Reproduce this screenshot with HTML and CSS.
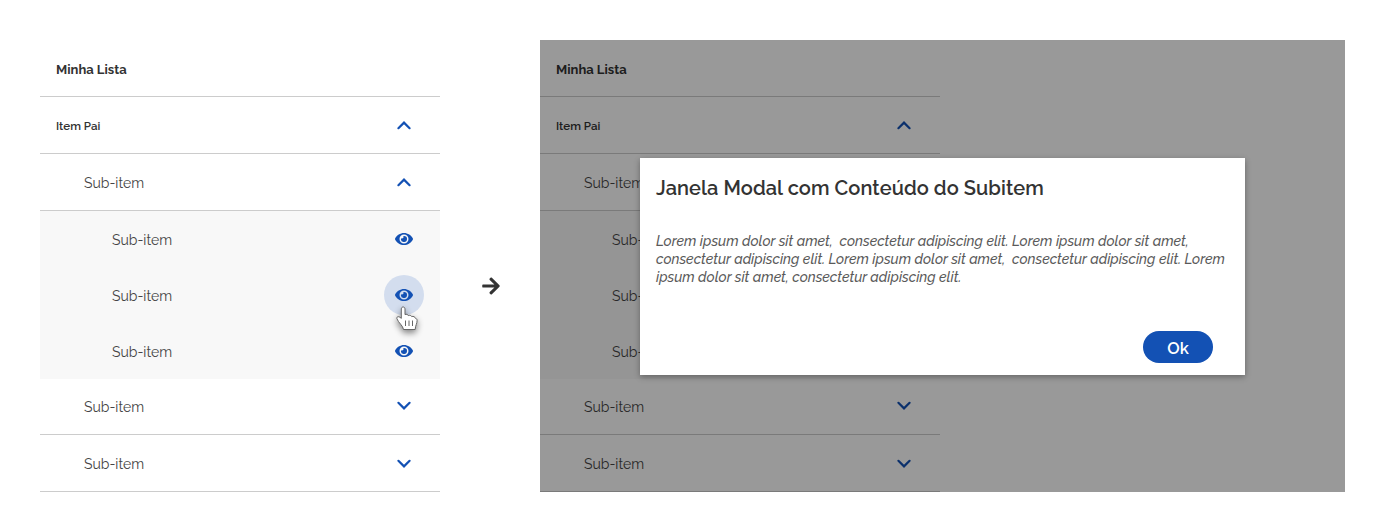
FILE: index.html
```html
<!DOCTYPE html>
<html lang="pt-BR">
<head>
<meta charset="utf-8">
<title>Minha Lista</title>
<link rel="stylesheet" href="styles.css">
</head>
<body>
<svg class="defs" width="0" height="0">
  <symbol id="up" viewBox="0 0 14 9"><path d="M1.400 7.200 7 1.600l5.600 5.600" fill="none" stroke="currentColor" stroke-width="2.2" stroke-linecap="round"/></symbol>
  <symbol id="down" viewBox="0 0 14 9"><path d="M1.400 1.800 7 7.400l5.600-5.600" fill="none" stroke="currentColor" stroke-width="2.2" stroke-linecap="round"/></symbol>
  <symbol id="eye" viewBox="0 0 576 512"><path fill="currentColor" d="M572.52 241.4C518.29 135.59 410.93 64 288 64S57.68 135.64 3.48 241.41a32.35 32.35 0 0 0 0 29.19C57.71 376.41 165.07 448 288 448s230.32-71.64 284.52-177.41a32.35 32.35 0 0 0 0-29.19zM288 400a144 144 0 1 1 144-144 143.93 143.93 0 0 1-144 144zm0-240a95.31 95.31 0 0 0-25.31 3.79 47.85 47.85 0 0 1-66.9 66.9A95.78 95.78 0 1 0 288 160z"/></symbol>
</svg>
<main class="page">
  <section class="list">
    <div class="row"><span class="title">Minha Lista</span></div>
    <div class="row"><span class="parent">Item Pai</span><svg class="chevron"><use href="#up"/></svg></div>
    <div class="row sub"><span>Sub-item</span><svg class="chevron"><use href="#up"/></svg></div>
    <div class="group">
      <div class="row leaf"><span>Sub-item</span><i class="action"><svg class="eye"><use href="#eye"/></svg></i></div>
      <div class="row leaf"><span>Sub-item</span><i class="action hover"><svg class="eye"><use href="#eye"/></svg>
        <svg class="cursor" viewBox="0 0 22 25"><path d="M5.300 3C5.300.3 9 .3 9 3v5.600c1.300-.7 2.900-.2 3.300 1 1.300-.6 2.900-.2 3.400 1 1.600-.6 3.400.3 3.700 1.700 1.300.3 1.700 1 1.700 2.200 0 3.500-1.700 4.500-1.900 9H7.500C7 19.500 2.500 17 .9 12.700c-.6-2 1.800-3.200 4.400-.3z" fill="#fff" stroke="#666" stroke-width="1"/><path d="M9.500 14.500v5.500M13 14.500v5.500M16.500 14.500v5.500" stroke="#666" fill="none"/></svg></i></div>
      <div class="row leaf"><span>Sub-item</span><i class="action"><svg class="eye"><use href="#eye"/></svg></i></div>
    </div>
    <div class="row sub short"><span>Sub-item</span><svg class="chevron"><use href="#down"/></svg></div>
    <div class="row sub"><span>Sub-item</span><svg class="chevron"><use href="#down"/></svg></div>
  </section>
  <div class="between"><svg class="arrow" viewBox="0 0 448 512"><path d="M190.5 66.9l22.2-22.2c9.400-9.400 24.600-9.400 33.900 0L441 239c9.400 9.400 9.400 24.600 0 33.900L246.600 467.300c-9.400 9.400-24.600 9.400-33.900 0l-22.200-22.200c-9.500-9.500-9.300-25 .4-34.300L311.400 296H24c-13.300 0-24-10.700-24-24v-32c0-13.300 10.700-24 24-24h287.400L190.900 101.200c-9.800-9.300-10-24.800-.4-34.300z" fill="#333"/></svg></div>
  <section class="screen">
    <div class="list">
      <div class="row"><span class="title">Minha Lista</span></div>
      <div class="row"><span class="parent">Item Pai</span><svg class="chevron"><use href="#up"/></svg></div>
      <div class="row sub"><span>Sub-item</span></div>
      <div class="group">
        <div class="row leaf"><span>Sub-item</span></div>
        <div class="row leaf"><span>Sub-item</span></div>
        <div class="row leaf"><span>Sub-item</span></div>
      </div>
      <div class="row sub short"><span>Sub-item</span><svg class="chevron"><use href="#down"/></svg></div>
      <div class="row sub"><span>Sub-item</span><svg class="chevron"><use href="#down"/></svg></div>
    </div>
    <div class="scrim">
      <div class="modal">
        <h1>Janela Modal com Conteúdo do Subitem</h1>
        <p>Lorem ipsum dolor sit amet,&nbsp; consectetur adipiscing elit. Lorem ipsum dolor sit amet,<br>consectetur adipiscing elit. Lorem ipsum dolor sit amet,&nbsp; consectetur adipiscing elit. Lorem<br>ipsum dolor sit amet, consectetur adipiscing elit.</p>
        <button class="ok">Ok</button>
      </div>
    </div>
  </section>
</main>
</body>
</html>
```
FILE: styles.css
```css
* { box-sizing: border-box; }
body { margin: 0; background: #fff; color: #333; font-family: Raleway, Lato, "Open Sans", sans-serif; }
.defs { position: absolute; }
.page { display: flex; height: 532px; padding: 40px; }
.list { width: 400px; flex: none; }
.row { display: flex; align-items: center; justify-content: space-between; height: 57px; padding: 2px 28px 0 16px; border-bottom: 1px solid #ccc; font-size: 14px; line-height: 20px; white-space: nowrap; }
.row.sub { padding-left: 44px; }
.row.short { height: 56px; padding-top: 0; }
.row.leaf { height: 56px; padding-left: 72px; padding-right: 16px; border: 0; }
.sub, .leaf { color: #444; }
.group { background: #f8f8f8; }
.title { font-size: 13px; font-weight: 700; padding-top: 2px; }
.parent { font-size: 11.6px; font-weight: 600; }
.chevron { width: 16px; height: 9px; margin-bottom: 2px; color: #1351b4; }
.action { position: relative; display: flex; align-items: center; justify-content: center; width: 40px; height: 40px; margin-top: -2px; border-radius: 50%; color: #1351b4; }
.action.hover { background: #d3ddee; }
.eye { width: 18px; height: 16px; }
.cursor { position: absolute; left: 12px; top: 31px; width: 22px; height: 25px; filter: drop-shadow(0 3px 3px #0007); }
.between { display: flex; width: 100px; height: 492px; padding-left: 2px; align-items: center; justify-content: center; }
.arrow { width: 18px; height: 20px; }
.screen { position: relative; width: 805px; height: 452px; }
.scrim { position: absolute; inset: 0; padding: 118px 100px; background: rgba(0,0,0,.4); }
.modal { display: flex; flex-direction: column; width: 605px; height: 217px; padding: 16px 32px 12px 16px; background: #fff; box-shadow: 0 2px 6px #0005; }
h1 { margin: 0; font-size: 20px; line-height: 28px; font-weight: 600; letter-spacing: .08px; white-space: nowrap; }
p { margin: 30px 0 0; font-size: 14px; line-height: 18px; font-style: italic; font-weight: 500; color: #5a5a5a; white-space: nowrap; }
.ok { align-self: flex-end; width: 70px; height: 32px; margin-top: auto; border: 0; border-radius: 16px; background: #1351b4; color: #fff; padding: 1px 0 0; font: 600 16.5px Raleway, Lato, sans-serif; }
```
